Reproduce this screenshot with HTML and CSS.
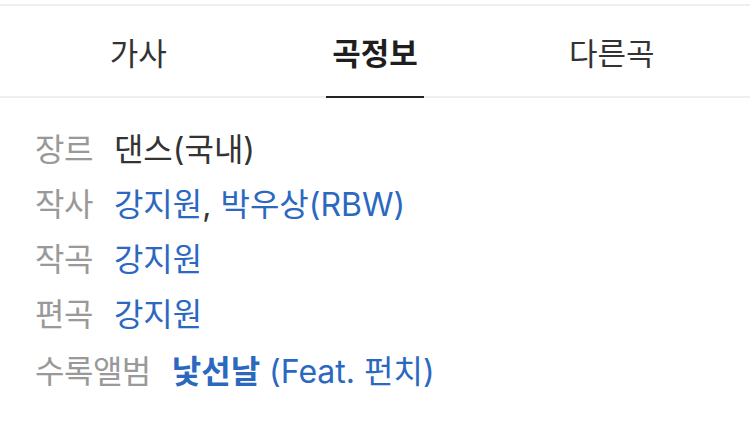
FILE: index.html
```html
<!DOCTYPE html>
<html lang="ko">
<head>
  <meta charset="UTF-8">
  <meta name="viewport" content="width=device-width, initial-scale=1.0">
  <title>곡정보</title>
  <link rel="stylesheet" href="styles.css">
</head>
<body>
  <!-- Tabs -->
  <nav class="tabs">
    <a class="tab">가사</a>
    <a class="tab active">곡정보</a>
    <a class="tab">다른곡</a>
  </nav>

  <!-- Song info -->
  <dl class="song-info">
    <div class="info-row">
      <dt>장르</dt>
      <dd>댄스(국내)</dd>
    </div>
    <div class="info-row">
      <dt>작사</dt>
      <dd><a class="link">강지원</a>, <a class="link">박우상(RBW)</a></dd>
    </div>
    <div class="info-row">
      <dt>작곡</dt>
      <dd><a class="link">강지원</a></dd>
    </div>
    <div class="info-row">
      <dt>편곡</dt>
      <dd><a class="link">강지원</a></dd>
    </div>
    <div class="info-row album">
      <dt>수록앨범</dt>
      <dd><a class="link"><strong>낯선날</strong> (Feat. 펀치)</a></dd>
    </div>
  </dl>
</body>
</html>
```

FILE: styles.css
```css
body {
  font-family: "Inter", "Noto Sans CJK KR", sans-serif;
  margin: 0;
  padding: 0;
  background: #fff;
  color: #333;
}

/* Tabs */
.tabs {
  display: flex;
  margin-top: 4px;
  padding: 0 20px;
  border-top: 2px solid #eceef1;
  border-bottom: 2px solid #eceef1;
}

.tab {
  flex: 1;
  display: flex;
  justify-content: center;
  height: 90px;
  align-items: center;
  font-size: 31px;
  color: #333;
  cursor: pointer;
}

.tab.active {
  font-weight: 700;
  color: #1e1e1e;
  position: relative;
}

.tab.active::after {
  content: "";
  position: absolute;
  bottom: -2px;
  left: 50%;
  width: 98px;
  height: 2px;
  margin-left: -49px;
  background: #222;
}

/* Song info */
.song-info {
  margin: 0;
  padding: 21px 35px;
}

.info-row {
  display: flex;
  gap: 21px;
  height: 55px;
  align-items: center;
  font-size: 32px;
}

.info-row.album {
  margin-top: 2px;
}

.info-row dt {
  color: #999;
  letter-spacing: -0.5px;
}

.info-row dd {
  margin: 0;
  color: #333;
}

.link {
  color: #2b68c0;
  cursor: pointer;
}

.link strong {
  font-weight: 700;
}
```
